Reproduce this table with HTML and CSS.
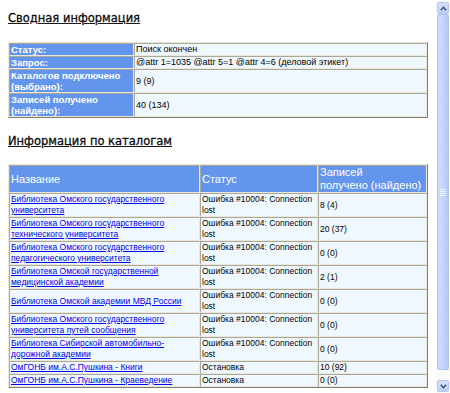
FILE: index.html
```html
<!DOCTYPE html>
<html lang="ru">
<head>
<meta charset="utf-8">
<title>Сводная информация</title>
<link rel="stylesheet" href="styles.css">
</head>
<body>
<div class="window">
  <main class="content">
    <h2 class="heading">Сводная информация</h2>
    <table class="grid summary">
      <tr><th>Статус:</th><td>Поиск окончен</td></tr>
      <tr><th>Запрос:</th><td>@attr 1=1035 @attr 5=1 @attr 4=6 (деловой этикет)</td></tr>
      <tr><th>Каталогов подключено (выбрано):</th><td>9 (9)</td></tr>
      <tr><th>Записей получено (найдено):</th><td>40 (134)</td></tr>
    </table>

    <h2 class="heading heading-second">Информация по каталогам</h2>
    <table class="grid catalogs">
      <colgroup><col class="c-name"><col class="c-status"><col class="c-count"></colgroup>
      <thead>
        <tr><th>Название</th><th>Статус</th><th>Записей<br>получено (найдено)</th></tr>
      </thead>
      <tbody>
        <tr><td><a href="#">Библиотека Омского государственного университета</a></td><td>Ошибка #10004: Connection lost</td><td>8 (4)</td></tr>
        <tr><td><a href="#">Библиотека Омского государственного технического университета</a></td><td>Ошибка #10004: Connection lost</td><td>20 (37)</td></tr>
        <tr><td><a href="#">Библиотека Омского государственного педагогического университета</a></td><td>Ошибка #10004: Connection lost</td><td>0 (0)</td></tr>
        <tr><td><a href="#">Библиотека Омской государственной медицинской академии</a></td><td>Ошибка #10004: Connection lost</td><td>2 (1)</td></tr>
        <tr><td><a href="#">Библиотека Омской академии МВД России</a></td><td>Ошибка #10004: Connection lost</td><td>0 (0)</td></tr>
        <tr><td><a href="#">Библиотека Омского государственного университета путей сообщения</a></td><td>Ошибка #10004: Connection lost</td><td>0 (0)</td></tr>
        <tr><td><a href="#">Библиотека Сибирской автомобильно-дорожной академии</a></td><td>Ошибка #10004: Connection lost</td><td>0 (0)</td></tr>
        <tr><td><a href="#">ОмГОНБ им.А.С.Пушкина - Книги</a></td><td>Остановка</td><td>10 (92)</td></tr>
        <tr><td><a href="#">ОмГОНБ им.А.С.Пушкина - Краеведение</a></td><td>Остановка</td><td>0 (0)</td></tr>
      </tbody>
    </table>
  </main>

  <div class="scrollbar" aria-hidden="true">
    <div class="sb-btn">
      <svg width="7" height="5" viewBox="0 0 7 5"><polyline points="0.8,4.2 3.5,1.3 6.2,4.2" fill="none" stroke="#3c4f7a" stroke-width="1.5"/></svg>
    </div>
    <div class="sb-thumb">
      <svg width="6" height="7" viewBox="0 0 6 7"><g stroke="#eef3ff" stroke-width="1"><line x1="0" y1="0.5" x2="6" y2="0.5"/><line x1="0" y1="2.5" x2="6" y2="2.5"/><line x1="0" y1="4.5" x2="6" y2="4.5"/><line x1="0" y1="6.5" x2="6" y2="6.5"/></g></svg>
    </div>
    <div class="sb-track"></div>
    <div class="sb-btn">
      <svg width="7" height="5" viewBox="0 0 7 5"><polyline points="0.8,0.8 3.5,3.7 6.2,0.8" fill="none" stroke="#3c4f7a" stroke-width="1.5"/></svg>
    </div>
  </div>
</div>
</body>
</html>
```

FILE: styles.css
```css
html, body {
  margin: 0;
  height: 100%;
  overflow: hidden;
  background: #fff;
}

.window {
  display: flex;
  height: 393px;
}

.content {
  flex: 1;
  min-width: 0;
  padding: 8px;
  font-family: "Liberation Sans", Arial, sans-serif;
  font-size: 8.5px;
  line-height: 11px;
  color: #000;
}

.heading {
  margin: 3px 0 16px;
  font-family: "DejaVu Sans", Verdana, sans-serif;
  font-size: 11.5px;
  line-height: 15px;
  font-weight: normal;
  text-decoration: underline;
  text-decoration-thickness: 1px;
  color: #000;
  -webkit-text-stroke: 0.3px #1a1a1a;
}

.heading-second {
  margin-top: 16px;
  margin-bottom: 15px;
}

.grid {
  width: 100%;
  border-collapse: separate;
  border-spacing: 0;
  border: 1px solid;
  border-color: #ebe8da #807d70 #807d70 #ebe8da;
  background: #fff;
}

.grid th,
.grid td {
  border: 1px solid;
  border-color: #aca899 #ebe8da #ebe8da #aca899;
  padding: 0 1px;
  vertical-align: middle;
  text-align: left;
}

.summary th {
  width: 121px;
  background: #6495ed;
  color: #fff;
  font-weight: bold;
  font-size: 9.5px;
}

.summary td {
  background: #f0f8ff;
  font-size: 9px;
}

.catalogs {
  table-layout: fixed;
}

.c-name { width: 191px; }
.c-status { width: 118px; }

.catalogs thead th {
  background: #6495ed;
  color: #fff;
  font-weight: normal;
  font-size: 11px;
  line-height: 13px;
}

.catalogs td {
  background: #f0f8ff;
}

.catalogs a {
  color: #0000ee;
  text-decoration: underline;
}

/* fake Luna scrollbar */
.scrollbar {
  width: 14px;
  flex: none;
  box-sizing: border-box;
  padding: 2px 1px 1px;
  display: flex;
  flex-direction: column;
  background: #f9f9f5;
}

.sb-btn {
  height: 12px;
  flex: none;
  box-sizing: border-box;
  border: 1px solid #b3c7f4;
  border-radius: 2px;
  background: linear-gradient(to bottom, #d6e2fd, #bccffa);
  display: flex;
  align-items: center;
  justify-content: center;
}

.sb-thumb {
  flex: 1;
  box-sizing: border-box;
  border: 1px solid #b0c4f3;
  border-radius: 2px;
  background:
    repeating-linear-gradient(to bottom, transparent 0 2px, rgba(255,255,255,0.45) 2px 3px) 3px 0 / 1px 100% no-repeat,
    linear-gradient(to right, #cfdcfd, #c0d2fb 60%, #b6caf7);
  display: flex;
  align-items: center;
  justify-content: center;
}

.sb-track {
  height: 10px;
  flex: none;
}
```
